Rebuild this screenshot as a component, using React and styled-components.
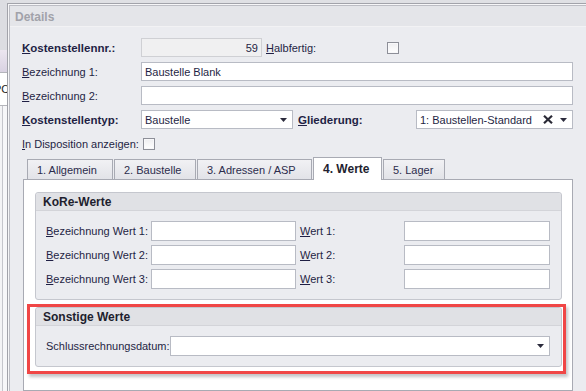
import React from "react";
import styled, { createGlobalStyle } from "styled-components";

const Global = createGlobalStyle`
  html, body { margin: 0; padding: 0; background: #ebecf0; }
  body {
    font-family: "Liberation Sans", Arial, sans-serif;
    font-size: 11px;
    color: #1f1f44;
  }
  * { box-sizing: border-box; }
`;

const Screen = styled.div`
  width: 586px;
  height: 391px;
  overflow: hidden;
  display: flex;
  background: #dfe0e4;
`;

const BackStrip = styled.div`
  width: 7px;
  flex: none;
  display: flex;
  flex-direction: column;
  overflow: hidden;
`;

const StripBlock = styled.div`
  height: ${(p) => p.$h}px;
  flex: ${(p) => (p.$grow ? 1 : "none")};
  background: ${(p) => p.$bg};
  border-bottom: ${(p) => (p.$line ? "1px solid #b4b5bb" : "none")};
  font-size: 11px;
  line-height: ${(p) => p.$h}px;
  white-space: nowrap;
  overflow: hidden;
`;

const StripText = styled.span`
  display: block;
  margin-left: -6px;
  color: #222;
`;

const StripRule = styled.div`
  width: 3px;
  height: 100%;
  border-right: 1px solid #c5c6cc;
  background: #f4f4f6;
`;

const Window = styled.div`
  flex: 1;
  margin-top: 3px;
  border-top: 1px solid #a2a3aa;
  border-left: 1px solid #a2a3aa;
  padding: 1px 0 0 1px;
  background: #f6f6f8;
  display: flex;
  min-width: 0;
`;

const Frame = styled.div`
  flex: 1;
  border-top: 1px solid #bcbdc4;
  border-left: 1px solid #bcbdc4;
  background: #ebecf0;
  display: flex;
  flex-direction: column;
  min-width: 0;
`;

const TitleBar = styled.div`
  height: 21px;
  flex: none;
  background: #e4e5e9;
  border-bottom: 1px solid #f2f2f4;
  padding: 1px 0 0 5px;
  display: flex;
  align-items: center;
  font-size: 12px;
  font-weight: bold;
  color: #a1a2aa;
`;

const Form = styled.div`
  flex: 1;
  padding: 11px 13px 0 12px;
  display: flex;
  flex-direction: column;
  gap: 5px;
  min-height: 0;
`;

const Row = styled.div`
  display: flex;
  align-items: center;
  height: ${(p) => p.$h || 19}px;
  margin-top: ${(p) => p.$mt || 0}px;
  flex: none;
`;

const Label = styled.div`
  width: ${(p) => p.$w}px;
  margin-left: ${(p) => p.$ml || 0}px;
  flex: none;
  white-space: nowrap;
  font-size: ${(p) => (p.$bold ? "11.5px" : "11px")};
  font-weight: ${(p) => (p.$bold ? "bold" : "normal")};
  color: #1f1f44;
`;

const Key = styled.span`
  text-decoration: underline;
  text-underline-offset: 1px;
`;

const Field = styled.div`
  width: ${(p) => (p.$w ? `${p.$w}px` : "auto")};
  flex: ${(p) => (p.$w ? "none" : 1)};
  height: ${(p) => p.$h || 19}px;
  border: 1px solid ${(p) => (p.$disabled ? "#cfd0d4" : "#b8bbc4")};
  background: ${(p) => (p.$disabled ? "#f0f0f1" : "#ffffff")};
  display: flex;
  align-items: center;
  justify-content: ${(p) => (p.$right ? "flex-end" : "flex-start")};
  padding: 0 ${(p) => (p.$right ? 3 : 5)}px 0 3px;
  font-size: 11px;
  color: #1f1f44;
  white-space: nowrap;
  overflow: hidden;
`;

const FieldText = styled.span`
  flex: 1;
`;

const FieldIcons = styled.span`
  display: flex;
  align-items: center;
  gap: 7px;
`;

const CheckBox = styled.div`
  width: 12px;
  height: 12px;
  flex: none;
  border: 1px solid #8d8f98;
  background: linear-gradient(#eeeef0, #ffffff);
  box-shadow: inset 0 0 0 1px #f8f8fa;
`;

const Arrow = () => (
  <svg width="7" height="4" viewBox="0 0 7 4">
    <polygon points="0,0 7,0 3.5,4" fill="#2b2b3c" />
  </svg>
);

const Cross = () => (
  <svg width="10" height="9" viewBox="0 0 10 9">
    <path d="M1 0.8 L9 8.2 M9 0.8 L1 8.2" stroke="#2a2a36" strokeWidth="2.2" />
  </svg>
);

const TabArea = styled.div`
  display: flex;
  flex-direction: column;
  margin: -1px 0 0 1px;
  flex: 1;
  min-height: 0;
`;

const TabStrip = styled.div`
  display: flex;
  align-items: flex-end;
  gap: 1px;
  padding-left: 4px;
  height: 22px;
  flex: none;
  position: relative;
  z-index: 1;
`;

const Tab = styled.div`
  width: ${(p) => p.$w}px;
  height: ${(p) => (p.$active ? 23 : 20)}px;
  margin-bottom: ${(p) => (p.$active ? -1 : 0)}px;
  border: 1px solid #a8aab3;
  border-bottom: none;
  background: ${(p) =>
    p.$active ? "#ffffff" : "linear-gradient(#f1f1f4, #e2e3e8)"};
  padding: ${(p) => (p.$active ? "0 0 1px 9px" : "0 0 0 9px")};
  display: flex;
  align-items: center;
  font-size: ${(p) => (p.$active ? "12px" : "11px")};
  font-weight: ${(p) => (p.$active ? "bold" : "normal")};
  color: ${(p) => (p.$active ? "#1f1f30" : "#2c2c4c")};
  white-space: nowrap;
`;

const TabPanel = styled.div`
  flex: 1;
  background: #ffffff;
  border: 1px solid #a8aab3;
  padding: 12px 10px 0 11px;
  display: flex;
  flex-direction: column;
  gap: 7px;
`;

const Group = styled.div`
  border: 1px solid #c5c7ce;
  border-radius: 3px;
  background: #ebecf0;
  position: relative;
`;

const GroupHeader = styled.div`
  height: 18px;
  background: #e0e1e5;
  border-bottom: 1px solid #d3d4d9;
  border-radius: 3px 3px 0 0;
  padding-left: 7px;
  display: flex;
  align-items: center;
  font-size: 12px;
  font-weight: bold;
  color: #1e1e2e;
`;

const GroupBody = styled.div`
  padding: 10px 11px 10px 10px;
  display: flex;
  flex-direction: column;
  gap: 4px;
`;

const Highlight = styled.div`
  position: absolute;
  top: -4px;
  left: -9px;
  right: -5px;
  bottom: -8px;
  border: 3px solid #f04646;
  box-shadow: 2px 3px 3px rgba(60, 60, 70, 0.3);
  pointer-events: none;
`;

const tabs = [
  { label: "1. Allgemein", w: 86 },
  { label: "2. Baustelle", w: 82 },
  { label: "3. Adressen / ASP", w: 115 },
  { label: "4. Werte", w: 69, active: true },
  { label: "5. Lager", w: 62 },
];

export default function App() {
  return (
    <>
      <Global />
      <Screen>
        <BackStrip>
          <StripBlock $h={50} $bg="#dcdde2" />
          <StripBlock $h={23} $bg="linear-gradient(#ece6f0, #d9d2e2)" $line />
          <StripBlock $h={33} $bg="#ffffff" $line>
            <StripText>PC</StripText>
          </StripBlock>
          <StripBlock $grow $bg="#f7f7f9">
            <StripRule />
          </StripBlock>
        </BackStrip>
        <Window>
          <Frame>
            <TitleBar>Details</TitleBar>
            <Form>
              <Row>
                <Label $w={119} $bold>
                  <Key>K</Key>ostenstellennr.:
                </Label>
                <Field $w={121} $disabled $right>
                  59
                </Field>
                <Label $w={121} $ml={4}>
                  <Key>H</Key>albfertig:
                </Label>
                <CheckBox />
              </Row>
              <Row>
                <Label $w={119}>
                  <Key>B</Key>ezeichnung 1:
                </Label>
                <Field>Baustelle Blank</Field>
              </Row>
              <Row>
                <Label $w={119}>
                  <Key>B</Key>ezeichnung 2:
                </Label>
                <Field />
              </Row>
              <Row>
                <Label $w={119} $bold>
                  <Key>K</Key>ostenstellentyp:
                </Label>
                <Field $w={152}>
                  <FieldText>Baustelle</FieldText>
                  <Arrow />
                </Field>
                <Label $w={118} $ml={5} $bold>
                  <Key>G</Key>liederung:
                </Label>
                <Field>
                  <FieldText>1: Baustellen-Standard</FieldText>
                  <FieldIcons>
                    <Cross />
                    <Arrow />
                  </FieldIcons>
                </Field>
              </Row>
              <Row $h={18} $mt={1}>
                <Label $w={121}>
                  <Key>I</Key>n Disposition anzeigen:
                </Label>
                <CheckBox />
              </Row>
              <TabArea>
                <TabStrip>
                  {tabs.map((t) => (
                    <Tab key={t.label} $w={t.w} $active={t.active}>
                      {t.label}
                    </Tab>
                  ))}
                </TabStrip>
                <TabPanel>
                  <Group>
                    <GroupHeader>KoRe-Werte</GroupHeader>
                    <GroupBody>
                      {[1, 2, 3].map((n) => (
                        <Row key={n} $h={20}>
                          <Label $w={105}>
                            <Key>B</Key>ezeichnung Wert {n}:
                          </Label>
                          <Field $w={145} $h={20} />
                          <Label $w={104} $ml={4}>
                            <Key>W</Key>ert {n}:
                          </Label>
                          <Field $h={20} />
                        </Row>
                      ))}
                    </GroupBody>
                  </Group>
                  <Group>
                    <GroupHeader>Sonstige Werte</GroupHeader>
                    <GroupBody>
                      <Row $h={20}>
                        <Label $w={124}>Schlussrechnungsdatum:</Label>
                        <Field $h={20}>
                          <FieldText />
                          <Arrow />
                        </Field>
                      </Row>
                    </GroupBody>
                    <Highlight />
                  </Group>
                </TabPanel>
              </TabArea>
            </Form>
          </Frame>
        </Window>
      </Screen>
    </>
  );
}
